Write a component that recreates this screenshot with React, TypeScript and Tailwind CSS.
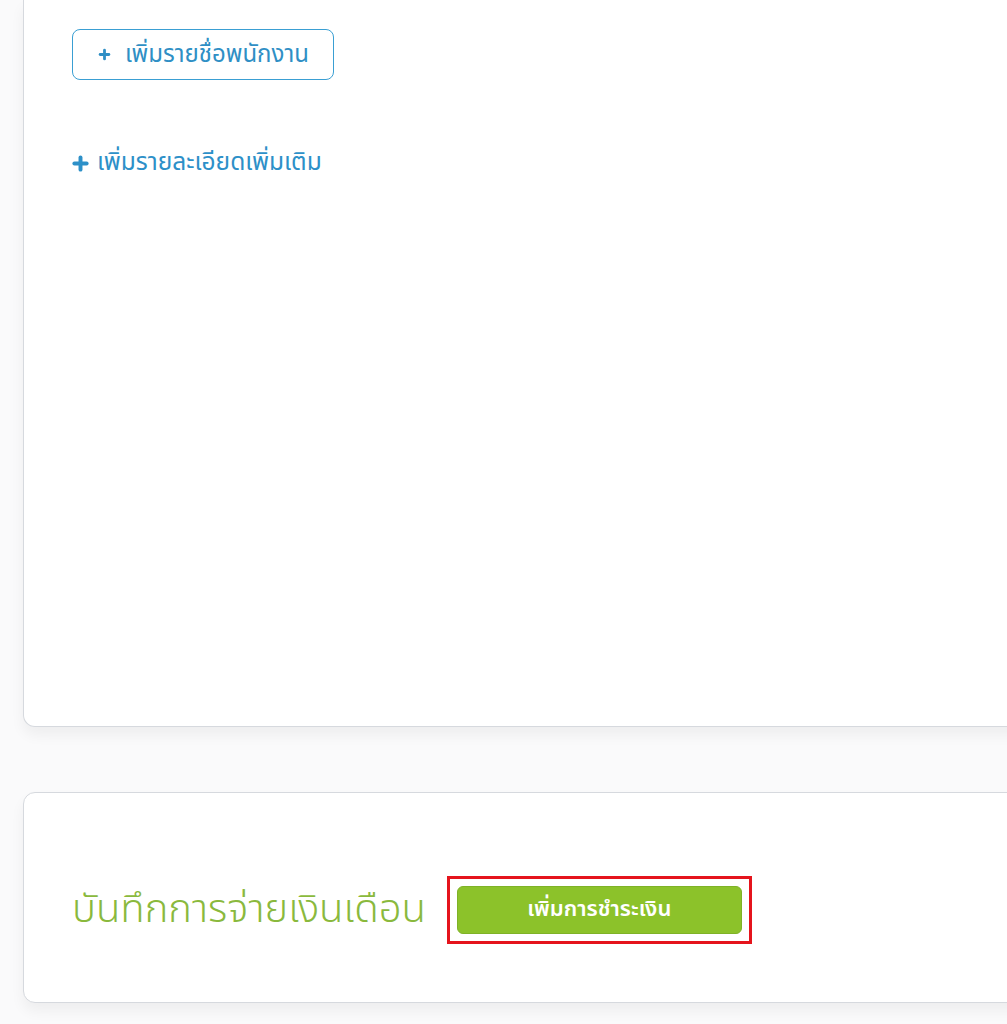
import { Plus } from 'lucide-react'

const THAI = { fontFamily: '"Noto Sans Thai", "Noto Sans", "Liberation Sans", sans-serif' }

export default function App() {
  return (
    <div className="min-h-screen w-full overflow-hidden bg-[#fafafb] pl-[23px]" style={THAI}>
      {/* Employees card, continues from above */}
      <div className="mr-[-40px] h-[727px] rounded-b-xl border-x border-b border-[#d6d9de] bg-white pl-[48px] pt-[29px] shadow-[0_8px_14px_rgba(0,0,0,0.05)]">
        <button
          type="button"
          className="flex h-[51px] w-[262px] items-center gap-[13px] rounded-lg border border-[#3a9fd3] px-[24px] text-[24px] leading-none text-[#2f8fc5]"
        >
          <Plus className="size-[15px]" strokeWidth={4.5} />
          เพิ่มรายชื่อพนักงาน
        </button>

        <button type="button" className="mt-[71px] flex items-center gap-[6px] text-[24.5px] leading-none text-[#2d90c8]">
          <Plus className="-ml-[2px] size-[21px]" strokeWidth={4.5} />
          เพิ่มรายละเอียดเพิ่มเติม
        </button>
      </div>

      {/* Payroll card */}
      <div className="mr-[-40px] mt-[65px] flex h-[211px] items-center gap-[21px] rounded-xl border border-[#d6d9de] bg-white pl-[48px] pt-[24px] shadow-[0_8px_14px_rgba(0,0,0,0.05)]">
        <h2 className="text-[40px] font-light leading-none text-[#8ab93d]">บันทึกการจ่ายเงินเดือน</h2>
        <div className="border-[3px] border-[#e5141c] p-[7px]">
          <button
            type="button"
            className="flex h-[48px] w-[285px] items-center justify-center rounded-md border border-[#7fb227] bg-[#8cc22a] text-[22px] font-semibold text-white"
          >
            เพิ่มการชำระเงิน
          </button>
        </div>
      </div>
    </div>
  )
}
